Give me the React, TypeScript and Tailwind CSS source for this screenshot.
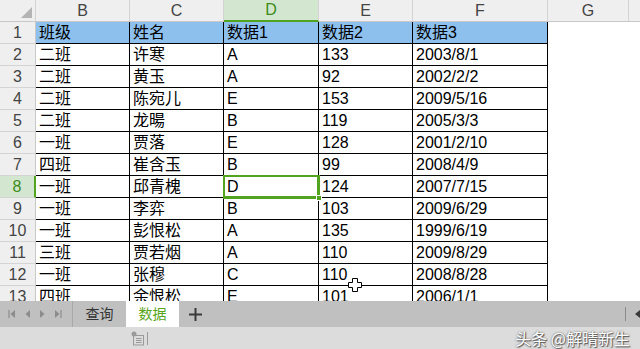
const cols = ['B', 'C', 'D', 'E', 'F'];
const widths = ['w-[94px]', 'w-[94px]', 'w-[95px]', 'w-[94px]', 'w-[135px]'];

const rows: string[][] = [
  ['班级', '姓名', '数据1', '数据2', '数据3'],
  ['二班', '许寒', 'A', '133', '2003/8/1'],
  ['二班', '黄玉', 'A', '92', '2002/2/2'],
  ['二班', '陈宛儿', 'E', '153', '2009/5/16'],
  ['二班', '龙暘', 'B', '119', '2005/3/3'],
  ['一班', '贾落', 'E', '128', '2001/2/10'],
  ['四班', '崔含玉', 'B', '99', '2008/4/9'],
  ['一班', '邱青槐', 'D', '124', '2007/7/15'],
  ['一班', '李弈', 'B', '103', '2009/6/29'],
  ['一班', '彭恨松', 'A', '135', '1999/6/19'],
  ['三班', '贾若烟', 'A', '110', '2009/8/29'],
  ['一班', '张穆', 'C', '110', '2008/8/28'],
  ['四班', '余恨松', 'E', '101', '2006/1/1'],
];

const font = { fontFamily: '"Liberation Sans", "Noto Sans CJK SC", sans-serif' };

export default function App() {
  return (
    <div className="w-[640px] h-[349px] flex flex-col overflow-hidden bg-white text-black" style={font}>
      <div className="relative h-[301px] shrink-0 overflow-hidden">
        {/* column headers */}
        <div className="flex h-[22px] bg-[#efefef] border-b border-[#c8c8c8]">
          <div className="relative w-[36px] shrink-0 border-r border-[#d4d4d4]">
            <div className="absolute right-[3px] bottom-[3px] w-0 h-0 border-l-[11px] border-l-transparent border-b-[11px] border-b-[#b4b4b4]" />
          </div>
          {cols.map((c, i) => (
            <div
              key={c}
              className={`${widths[i]} shrink-0 flex items-center justify-center text-[16px] border-r border-[#d4d4d4] ${
                c === 'D' ? 'bg-[#d3e6cf] text-[#3d8c1a] border-b-2 border-b-[#52a31f] -mb-px' : 'text-[#444]'
              }`}
            >
              {c}
            </div>
          ))}
          <div className="w-[81px] shrink-0 flex items-center justify-center text-[16px] text-[#444] border-r border-[#d4d4d4]">G</div>
          <div className="flex-1" />
        </div>

        {rows.map((r, ri) => {
          const n = ri + 1;
          const sel = n === 8;
          return (
            <div key={n} className="flex h-[22px]">
              <div
                className={`w-[36px] shrink-0 flex items-center justify-center text-[16px] border-b border-[#d4d4d4] ${
                  sel ? 'bg-[#d3e6cf] text-[#3d8c1a] border-r-2 border-r-[#52a31f]' : 'bg-[#efefef] text-[#444] border-r border-r-[#c8c8c8]'
                }`}
              >
                {n}
              </div>
              {r.map((v, ci) => (
                <div
                  key={ci}
                  className={`relative ${widths[ci]} shrink-0 flex items-center pl-[3px] text-[16px] leading-none whitespace-nowrap border-r border-b border-black ${
                    n === 1 ? 'bg-[#8ec0ee]' : 'bg-white'
                  }`}
                >
                  {v}
                  {sel && ci === 2 && (
                    <div className="absolute z-10 left-[-1px] top-[-1px] w-[97px] h-[24px] border-l-2 border-t-2 border-r-[3px] border-b-[3px] border-[#52a31f]">
                      <div className="absolute right-[-5px] bottom-[-5px] w-[6px] h-[6px] bg-[#52a31f] border border-white" />
                    </div>
                  )}
                </div>
              ))}
              <div className="w-[81px] shrink-0" />
            </div>
          );
        })}

        {/* mouse cursor */}
        <svg className="absolute z-20 left-[347px] top-[277px]" width="16" height="16" viewBox="0 0 16 16">
          <path d="M5.5 1.5h5v4h4v5h-4v4h-5v-4h-4v-5h4z" fill="#fff" stroke="#000" strokeWidth="1" />
        </svg>
      </div>

      {/* sheet tabs */}
      <div className="h-[26px] shrink-0 flex items-stretch bg-[#c0c0c0]">
        <div className="w-[73px] flex items-center gap-[8px] pl-[8px] border-r border-[#a8a8a8]">
          <svg width="8" height="10" viewBox="0 0 8 10"><path d="M1 1v8" stroke="#8c8c8c" strokeWidth="1.2" /><path d="M7 1L2.5 5 7 9z" fill="#8c8c8c" /></svg>
          <svg width="7" height="10" viewBox="0 0 7 10"><path d="M6 1L1.5 5 6 9z" fill="#8c8c8c" /></svg>
          <svg width="7" height="10" viewBox="0 0 7 10"><path d="M1 1l4.5 4L1 9z" fill="#8c8c8c" /></svg>
          <svg width="8" height="10" viewBox="0 0 8 10"><path d="M1 1l4.5 4L1 9z" fill="#8c8c8c" /><path d="M7 1v8" stroke="#8c8c8c" strokeWidth="1.2" /></svg>
        </div>
        <div className="w-[53px] flex items-center justify-center text-[14px] leading-none text-[#333]">查询</div>
        <div className="w-[53px] flex items-center justify-center text-[14px] leading-none text-[#5aa51e] bg-white">数据</div>
        <div className="w-[32px] flex items-center justify-center">
          <svg width="13" height="13" viewBox="0 0 13 13"><path d="M6.5 0v13M0 6.5h13" stroke="#3a3a3a" strokeWidth="2" /></svg>
        </div>
        <div className="flex-1" />
        <div className="flex items-center gap-[8px]">
          <div className="w-px h-[14px] bg-[#8a8a8a]" />
          <svg width="6" height="10" viewBox="0 0 6 10"><path d="M6 1L1 5l5 4z" fill="#3a3a3a" /></svg>
        </div>
      </div>

      {/* status bar */}
      <div className="relative h-[22px] shrink-0 flex items-center bg-[#dcdcdc]">
        <div className="absolute left-[131px] top-[4px] flex items-center gap-[3px]">
          <svg width="13" height="15" viewBox="0 0 13 15">
            <circle cx="3" cy="3" r="2.5" fill="#9a9a9a" />
            <rect x="2.5" y="4.5" width="10" height="9.5" fill="none" stroke="#9a9a9a" />
            <path d="M5 7.5h5.5M5 9.5h5.5M5 11.5h5.5" stroke="#9a9a9a" />
          </svg>
          <div className="w-px h-[13px] bg-[#9a9a9a]" />
        </div>
        <div
          className="ml-auto mr-[10px] text-[16px] leading-none text-white"
          style={{ fontFamily: '"Noto Sans CJK SC", sans-serif', textShadow: '0 0 2px #555, 1px 1px 1px #555' }}
        >
          头条 @解晴新生
        </div>
      </div>
    </div>
  );
}
